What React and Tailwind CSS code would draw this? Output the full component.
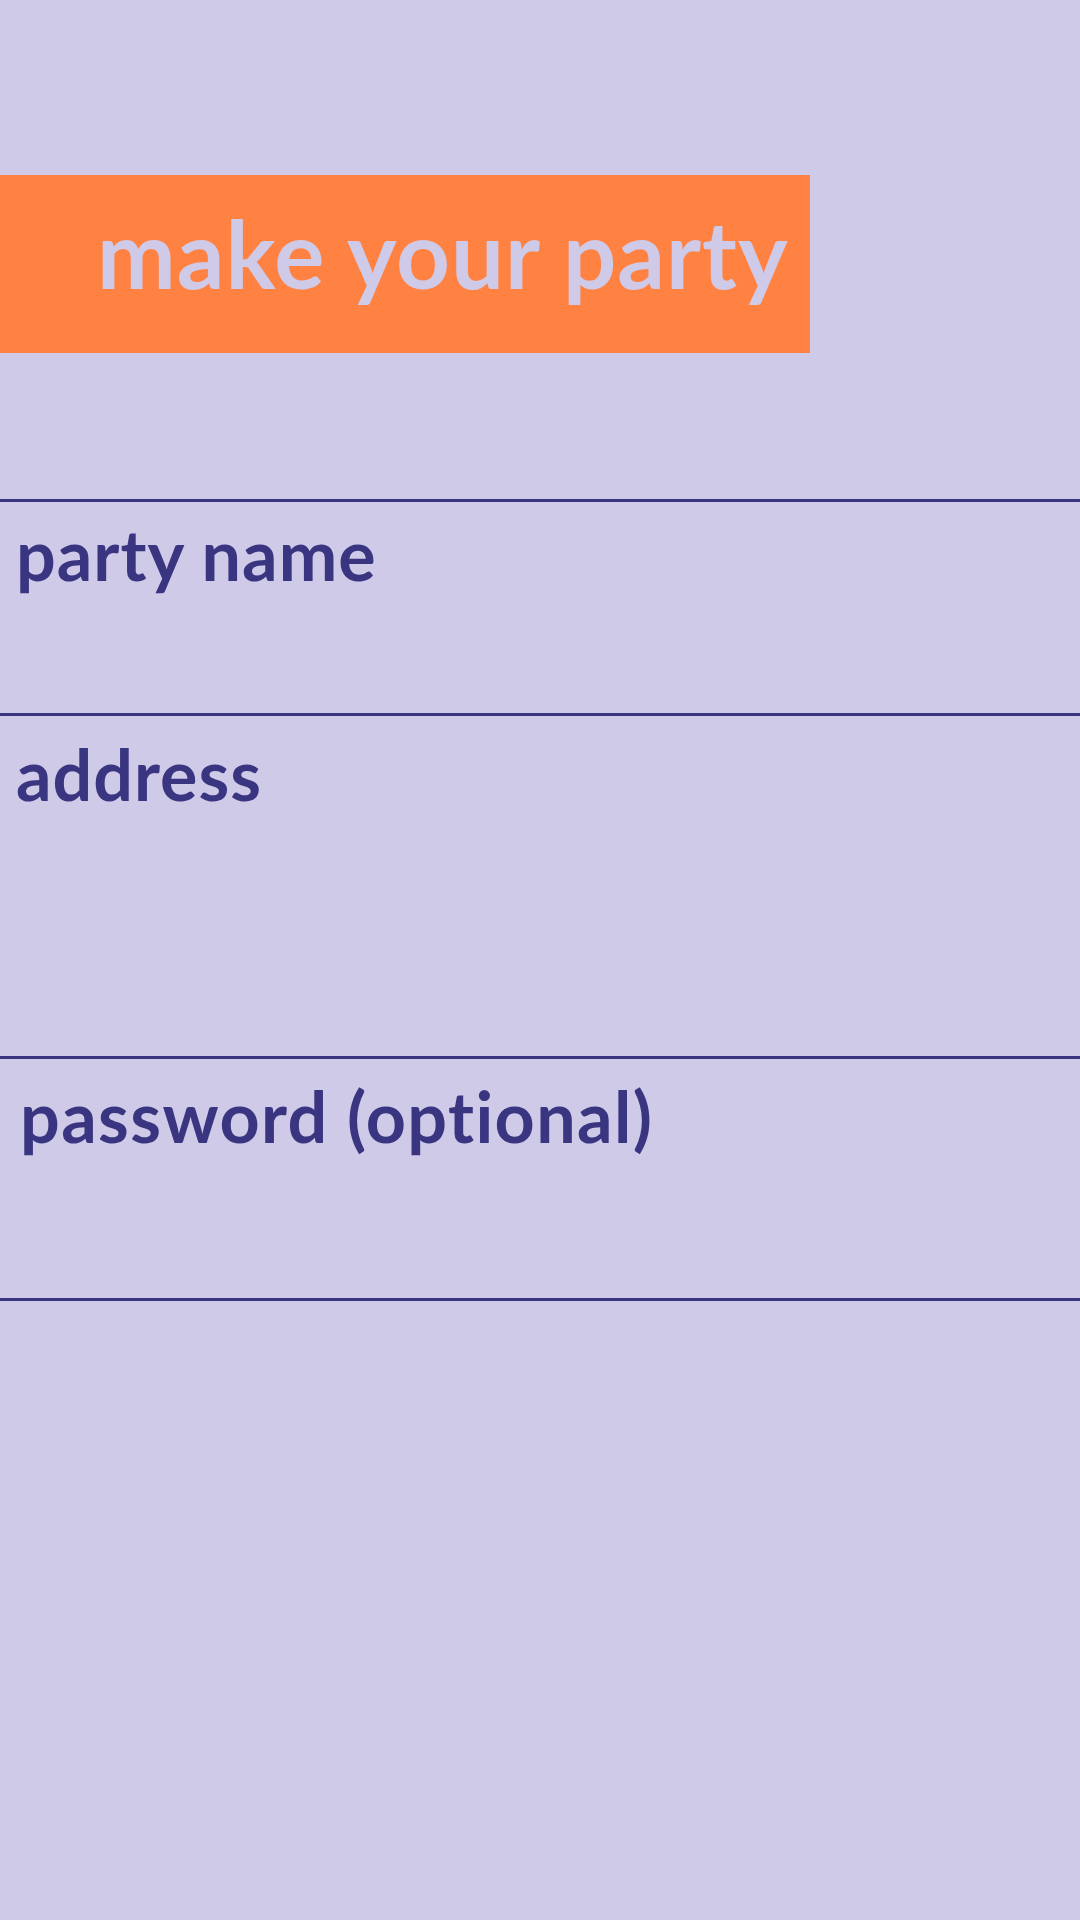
export default function App() {
  return (
    <div className="min-h-[1920px] w-[1080px] bg-[#cfcae8] pt-[175px]" style={{ fontFamily: "Lato, 'Noto Sans', sans-serif" }}>
      <div className="h-[178px] w-[810px] bg-[#ff8242] pl-[97px] pt-[31px]">
        <div className="text-[94px] font-bold leading-none text-[#cfcae8] tracking-[1px] whitespace-nowrap">make your party</div>
      </div>
      <div className="mt-[146px]">
        <div className="h-[214px] border-t-[3px] border-[#3a3580] pl-[16px] pt-[17px]">
          <div className="text-[70px] font-bold leading-none text-[#3a3580] tracking-[1px]">party name</div>
        </div>
        <div className="h-[343px] border-t-[3px] border-[#3a3580] pl-[16px] pt-[23px]">
          <div className="text-[70px] font-bold leading-none text-[#3a3580] tracking-[1px]">address</div>
        </div>
        <div className="h-[245px] border-t-[3px] border-b-[3px] border-[#3a3580] pl-[20px] pt-[22px]">
          <div className="text-[70px] font-bold leading-none text-[#3a3580] tracking-[1.4px]">password (optional)</div>
        </div>
      </div>
    </div>
  );
}
